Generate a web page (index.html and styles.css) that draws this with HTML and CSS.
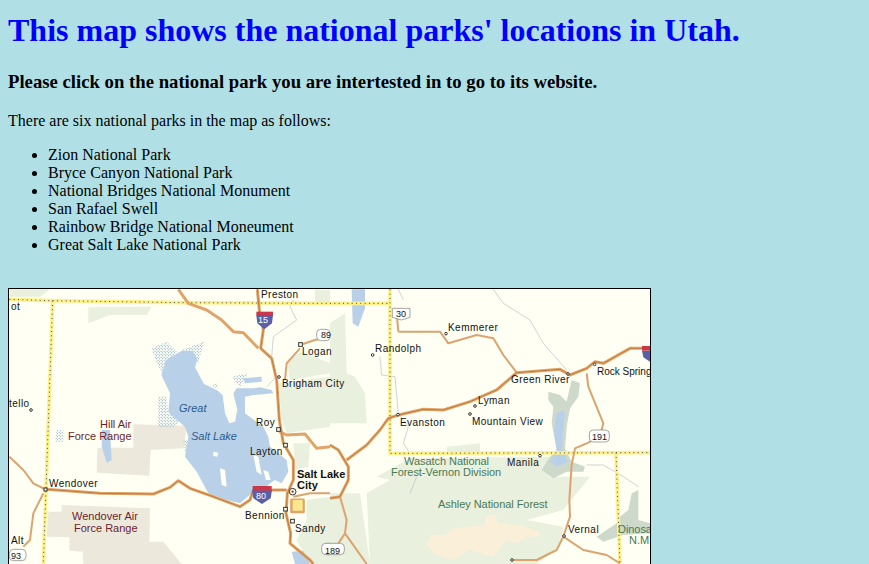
FILE: index.html
```html
<!DOCTYPE html>
<html lang="en">
<head>
    <meta charset="UTF-8">
    <title>Utah National Parks</title>
    <link rel="stylesheet" href="styles.css">
</head>
<body>
    <h1>This map shows the national parks' locations in Utah.</h1>
    <h3>Please click on the national park you are intertested in to go to its website.</h3>
    <p>There are six national parks in the map as follows:</p>
    <ul>
        <li>Zion National Park</li>
        <li>Bryce Canyon National Park</li>
        <li>National Bridges National Monument</li>
        <li>San Rafael Swell</li>
        <li>Rainbow Bridge National Moneument</li>
        <li>Great Salt Lake National Park</li>
    </ul>

    <!-- map: the two groups use coordinates of 3x tiles, left and right half -->
    <svg class="map" viewBox="9 289 641 276" width="641" height="276" xmlns="http://www.w3.org/2000/svg">
        <defs>
            <pattern id="marsh" width="9" height="9" patternUnits="userSpaceOnUse">
                <circle cx="2" cy="2" r="1.6" fill="#5f8cb8"/>
                <circle cx="6.5" cy="6.5" r="1.6" fill="#5f8cb8"/>
            </pattern>
        </defs>
        <rect class="land" x="9" y="289" width="641" height="276"/>

        <g transform="translate(0,280) scale(0.33333)">
            <g class="forest">
                <path d="M265,82 L455,80 L440,105 L330,105 L265,130Z"/>
                <path d="M835,310 L990,290 L990,440 L860,460 L845,420Z"/>
                <path d="M945,30 L990,30 L990,70 L945,70Z"/>
                <path d="M860,240 L905,215 L990,250 L990,280 L870,300Z"/>
                <path d="M880,490 L930,490 L925,560 L885,570Z"/>
                <path d="M920,660 L990,650 L990,852 L930,852 L890,780 L920,720Z"/>
                <path d="M30,28 L150,28 L120,50 L30,50Z"/>
            </g>
            <g class="base">
                <path d="M400,433 L560,437 L552,505 L452,510 L448,587 L290,578 L292,503 L400,503Z"/>
                <path d="M185,675 L450,685 L448,785 L490,785 L545,852 L250,852 L248,815 L208,812 L208,772 L140,770 L145,695 L185,695Z"/>
            </g>
            <g class="marsh">
                <path d="M455,205 L500,185 L530,215 L490,285 L470,250Z"/>
                <path d="M545,210 L612,185 L595,250Z"/>
                <path d="M695,290 L745,280 L720,320Z"/>
                <path d="M475,350 L500,350 L505,400 L560,410 L520,440 L475,440Z"/>
                <path d="M550,480 L575,480 L580,520 L555,520Z"/>
                <path d="M170,450 L190,450 L190,485 L165,485Z"/>
                <path d="M630,320 L650,310 L655,325Z"/>
            </g>
            <g class="water">
                <path d="M484,285 L498,240 L545,212 L578,212 L592,238 L585,262 L612,312 L650,330 L668,345 L675,400 L688,430 L705,425 L712,390 L700,340 L710,325 L760,325 L780,322 L815,330 L820,340 L760,345 L735,350 L735,400 L790,440 L805,470 L810,500 L860,540 L865,575 L845,610 L825,600 L810,610 L795,625 L755,640 L720,670 L680,660 L625,640 L590,575 L555,530 L565,470 L555,440 L520,410 L505,395 L510,340Z"/>
                <path d="M305,450 L330,450 L335,540 L320,548 L305,500Z"/>
                <path d="M730,295 L785,290 L785,305 L735,310Z"/>
                <path d="M875,815 L910,812 L930,852 L885,852Z"/>
            </g>
            <g class="land">
                <path d="M640,515 L655,518 L652,530 L640,528Z"/>
                <path d="M660,565 L675,570 L680,620 L665,615Z"/>
                <path d="M760,525 L775,530 L785,585 L770,575Z"/>
                <path d="M790,570 L805,575 L812,600 L798,600Z"/>
            </g>
            <g class="river">
                <path d="M880,60 L870,80 L890,120 L820,170 L815,230"/>
                <path d="M835,285 L800,320"/>
            </g>
            <g class="border">
                <path d="M28,58 L150,62 L550,68 L990,70"/>
                <path d="M158,62 L130,852"/>
            </g>
            <g class="border-dots">
                <path d="M28,58 L150,62 L550,68 L990,70"/>
                <path d="M158,62 L130,852"/>
            </g>
            <g class="road">
                <path d="M28,530 L70,570 L100,610 L140,630"/>
                <path d="M130,640 L100,700 L90,780 L70,800"/>
                <path d="M900,205 L860,250 L855,300"/>
                <path d="M900,195 L945,180 L990,170"/>
                <path d="M880,650 L930,640 L990,640"/>
            </g>
            <g class="highway">
                <path d="M535,28 L565,70 L620,90 L665,120 L700,155 L730,158 L775,205"/>
                <path d="M772,28 L778,90 L790,150 L782,205 L815,235 L830,300 L838,420 L850,490 L880,540 L880,600 L862,640 L858,700 L872,760 L870,790 L930,840 L940,852"/>
                <path d="M140,628 L300,640 L460,642 L510,622 L535,602 L570,625 L640,650 L720,680 L750,660 L760,630 L860,630"/>
                <path d="M838,455 L860,465 L915,462 L950,505 L990,500"/>
                <path d="M875,660 L910,660 L910,695 L875,695Z"/>
            </g>
            <path class="yellow" d="M878,660 L908,660 L908,692 L878,692Z"/>
            <g class="core">
                <path d="M772,28 L778,90 L790,150 L782,205 L815,235 L830,300 L838,420 L850,490 L880,540 L880,600 L862,640 L858,700 L872,760 L870,790 L930,840 L940,852"/>
                <path d="M140,628 L300,640 L460,642 L510,622 L535,602 L570,625 L640,650 L720,680 L750,660 L760,630 L860,630"/>
            </g>
            <g class="town">
                <rect x="896" y="188" width="11" height="11"/>
                <rect x="830" y="443" width="11" height="11"/>
                <rect x="851" y="490" width="11" height="11"/>
                <rect x="851" y="682" width="11" height="11"/>
                <rect x="872" y="718" width="11" height="11"/>
                <rect x="132" y="624" width="9" height="9"/>
                <circle cx="93" cy="390" r="4"/>
                <circle cx="837" cy="291" r="4"/>
                <circle cx="878" cy="635" r="10"/>
            </g>
            <circle class="dot" cx="878" cy="635" r="3.5"/>

            <g class="shield">
                <rect x="950" y="148" width="40" height="34" rx="12"/>
                <rect x="968" y="790" width="40" height="34" rx="12"/>
                <rect x="28" y="808" width="50" height="34" rx="12"/>
            </g>
            <path class="i-blue" d="M769,105 L819,105 L816,130 L793,148 L772,130Z"/>
            <path class="i-red" d="M769,95 L819,95 L819,107 L769,107Z"/>
            <path class="i-blue" d="M756,630 L816,630 L812,655 L786,672 L760,655Z"/>
            <path class="i-red" d="M758,618 L815,618 L815,632 L758,632Z"/>
        </g>

        <g transform="translate(330,280) scale(0.33333)">
            <g class="forest">
                <path d="M0,130 L45,100 L50,280 L75,290 L105,340 L110,430 L0,430Z"/>
                <path d="M350,500 L450,490 L450,520 L350,520Z"/>
                <path d="M110,640 L180,600 L140,590 L240,535 L670,530 L660,590 L780,590 L700,690 L590,720 L700,740 L690,800 L620,852 L120,852Z"/>
                <path d="M0,640 L90,640 L120,852 L0,852Z"/>
            </g>
            <path class="reserve" d="M290,795 L305,765 L345,765 L370,745 L465,735 L470,705 L495,705 L505,730 L570,735 L630,755 L620,775 L590,770 L560,790 L530,780 L490,830 L420,810 L370,840 L320,825Z"/>
            <g class="gorge">
                <path d="M655,335 L690,345 L710,365 L725,300 L750,310 L745,350 L720,385 L710,440 L705,505 L725,545 L765,560 L760,575 L710,575 L670,595 L635,570 L660,530 L680,510 L665,430 L670,380 L655,360Z"/>
                <path d="M800,770 L860,730 L870,710 L895,690 L905,640 L925,630 L925,720 L960,730 L960,760 L880,765 L820,785Z"/>
            </g>
            <g class="water">
                <path d="M65,28 L105,28 L105,85 L85,140 L68,130Z"/>
                <path d="M680,400 L705,390 L700,450 L695,510 L715,545 L680,560 L660,545 L680,510 L672,450Z"/>
            </g>
            <g class="river">
                <path d="M490,28 L520,70 L600,120 L640,190 L710,270"/>
                <path d="M150,230 L155,285 L195,290 L205,400 L235,440 L220,490 L240,520"/>
                <path d="M240,640 L260,590"/>
                <path d="M205,28 L220,60"/>
                <path d="M770,555 L820,555 L880,590 L925,620"/>
            </g>
            <g class="border">
                <path d="M0,70 L178,70"/>
                <path d="M180,28 L180,520 L960,518"/>
                <path d="M858,518 L870,852"/>
            </g>
            <g class="border-dots">
                <path d="M0,70 L178,70"/>
                <path d="M180,28 L180,520 L960,518"/>
                <path d="M858,518 L870,852"/>
            </g>
            <g class="road">
                <path d="M205,155 L330,155 L355,190 L440,165 L490,175 L520,225 L560,278"/>
                <path d="M205,155 L200,100"/>
                <path d="M770,280 L775,320 L820,430 L810,470 L770,490 L735,505 L725,555 L718,660 L720,710 L700,770 L680,810 L620,840 L545,840"/>
                <path d="M700,770 L760,810 L830,825 L870,850"/>
                <path d="M45,760 L25,790"/>
                <path d="M30,650 L50,720 L45,760 L110,852"/>
            </g>
            <g class="highway">
                <path d="M50,540 L110,495 L150,450 L175,415 L205,405 L280,388 L340,390 L420,365 L500,330 L560,278 L690,268 L720,285 L770,265 L795,245 L820,250 L900,205 L960,205"/>
                <path d="M0,495 L25,510 L55,560 L55,600 L30,650 L0,655"/>
            </g>
            <g class="core">
                <path d="M50,540 L110,495 L150,450 L175,415 L205,405 L280,388 L340,390 L420,365 L500,330 L560,278 L690,268 L720,285 L770,265 L795,245 L820,250 L900,205 L960,205"/>
                <path d="M0,495 L25,510 L55,560 L55,600 L30,650 L0,655"/>
            </g>
            <g class="town">
                <circle cx="348" cy="161" r="4"/>
                <circle cx="128" cy="225" r="4"/>
                <circle cx="204" cy="404" r="4"/>
                <circle cx="435" cy="378" r="4"/>
                <circle cx="420" cy="402" r="4"/>
                <circle cx="714" cy="282" r="4"/>
                <circle cx="794" cy="253" r="4"/>
                <circle cx="630" cy="527" r="4"/>
                <circle cx="702" cy="768" r="4"/>
                <circle cx="546" cy="840" r="4"/>
            </g>
            <g class="shield">
                <path d="M187,85 L240,85 L240,112 L214,120 L187,112Z"/>
                <rect x="778" y="450" width="60" height="36" rx="12"/>
                <rect x="-25" y="790" width="68" height="34" rx="12"/>
            </g>
            <path class="i-blue" d="M936,212 L960,212 L960,245 L940,232Z"/>
            <path class="i-red" d="M936,198 L960,198 L960,212 L936,212Z"/>
        </g>

        <g class="label">
            <text x="261" y="298">Preston</text>
            <text x="11" y="310">ot</text>
            <text x="9" y="407">tello</text>
            <text x="49" y="487">Wendover</text>
            <text x="256" y="426">Roy</text>
            <text x="250" y="455">Layton</text>
            <text x="245" y="519">Bennion</text>
            <text x="295" y="532">Sandy</text>
            <text x="302" y="355">Logan</text>
            <text x="282" y="387">Brigham City</text>
            <text x="375" y="352">Randolph</text>
            <text x="448" y="331">Kemmerer</text>
            <text x="511" y="383">Green River</text>
            <text x="597" y="375" class="tight">Rock Spring</text>
            <text x="478" y="404">Lyman</text>
            <text x="472" y="425">Mountain View</text>
            <text x="400" y="426">Evanston</text>
            <text x="507" y="466">Manila</text>
            <text x="568" y="533">Vernal</text>
            <text x="11" y="544">Alt</text>
        </g>
        <g class="label city">
            <text x="297" y="478">Salt Lake</text>
            <text x="297" y="489">City</text>
        </g>
        <g class="label lake">
            <text x="179" y="412">Great</text>
            <text x="191" y="440">Salt Lake</text>
        </g>
        <g class="label air">
            <text x="100" y="428">Hill Air</text>
            <text x="68" y="440">Force Range</text>
            <text x="72" y="520">Wendover Air</text>
            <text x="74" y="532">Force Range</text>
        </g>
        <g class="label park">
            <text x="404" y="465">Wasatch National</text>
            <text x="391" y="476">Forest-Vernon Division</text>
            <text x="438" y="508">Ashley National Forest</text>
            <text x="618" y="533">Dinosa</text>
            <text x="629" y="544">N.M.</text>
        </g>
        <g class="label num">
            <text x="258" y="323" class="white">15</text>
            <text x="256" y="499" class="white">80</text>
            <text x="321" y="338">89</text>
            <text x="396" y="317">30</text>
            <text x="592" y="440">191</text>
            <text x="325" y="554">189</text>
            <text x="11" y="559">93</text>
        </g>
    </svg>
</body>
</html>
```

FILE: styles.css
```css
/* General page */
body {
    background-color: #b0e0e6;
    font-family: "Liberation Serif", "Times New Roman", serif;
    font-size: 16px;
    color: black;
    margin: 8px 8px 0;
}

h1 {
    color: blue;
    font-size: 32px;
    margin: 4px 0 0;
}

h3 {
    font-size: 18.72px;
    margin: 22px 0 0;
}

p {
    margin: 19px 0 0;
}

ul {
    margin: 16px 0 0;
    padding-left: 40px;
}

/* Map */
.map {
    display: block;
    margin-top: 34px;
    border: 1px solid black;
    border-bottom: none;
}

.land, .land path { fill: #fffff3; }
.forest path { fill: #e9f0dd; }
.base path { fill: #ece8dc; }
.marsh path { fill: url(#marsh); }
.water path { fill: #b9d1e8; }
.reserve { fill: #faf0d9; }
.gorge path { fill: #cdd9cb; }
.yellow { fill: #fbe88c; }

.river path {
    fill: none;
    stroke: #b4bec8;
    stroke-width: 2;
}

.border path {
    fill: none;
    stroke: #fbf08c;
    stroke-width: 11;
}

.border-dots path {
    fill: none;
    stroke: #444;
    stroke-width: 3;
    stroke-dasharray: 3 10;
}

.road path {
    fill: none;
    stroke: #dca36f;
    stroke-width: 6;
    stroke-linejoin: round;
}

.highway path {
    fill: none;
    stroke: #e0a468;
    stroke-width: 9;
    stroke-linejoin: round;
}

.core path {
    fill: none;
    stroke: #bd7434;
    stroke-width: 2.5;
    stroke-linejoin: round;
}

.town rect, .town circle {
    fill: #fffff3;
    stroke: #333;
    stroke-width: 3;
}

.dot { fill: #8a3a2a; }

.shield rect, .shield path {
    fill: white;
    stroke: #777;
    stroke-width: 2;
}

.i-blue { fill: #5a5fa8; }
.i-red { fill: #c8384a; }

/* Map labels */
.label text {
    font-family: "Liberation Sans", Arial, sans-serif;
    font-size: 10px;
    letter-spacing: 0.45px;
    fill: #111;
}

.label .tight { letter-spacing: 0; }

.city text {
    font-size: 11px;
    font-weight: bold;
    letter-spacing: 0;
}

.lake text {
    font-size: 11px;
    font-style: italic;
    letter-spacing: 0;
    fill: #2c5c8c;
}

.air text {
    font-size: 11px;
    letter-spacing: 0;
    fill: #6e1f2c;
}

.park text {
    font-size: 11px;
    letter-spacing: -0.05px;
    fill: #4a7a55;
}

.num text {
    font-size: 9px;
    letter-spacing: 0;
}

.num .white { fill: white; }
```
